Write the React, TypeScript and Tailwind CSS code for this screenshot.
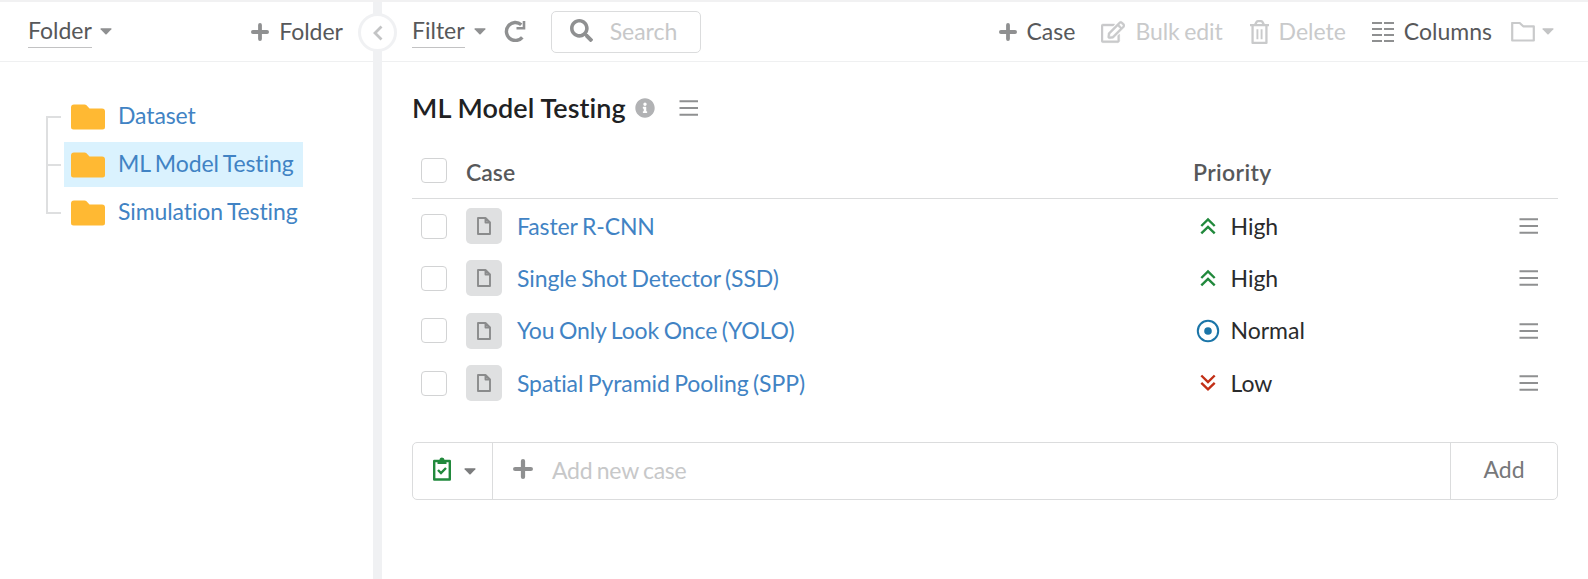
import React from "react";
import { FaInfoCircle, FaRegEdit, FaSearch } from "react-icons/fa";

type P = "High" | "Normal" | "Low";
const cases: { name: string; priority: P }[] = [
  { name: "Faster R-CNN", priority: "High" },
  { name: "Single Shot Detector (SSD)", priority: "High" },
  { name: "You Only Look Once (YOLO)", priority: "Normal" },
  { name: "Spatial Pyramid Pooling (SPP)", priority: "Low" },
];

function Plus({ className = "size-[18px]" }: { className?: string }) {
  return (
    <svg viewBox="0 0 18 18" className={className + " shrink-0 text-[#8f9091]"} fill="none" stroke="currentColor" strokeWidth="3.8" strokeLinecap="round">
      <path d="M9 1.900v14.200M1.900 9h14.200" />
    </svg>
  );
}

function Caret({ className = "text-[#8f9091]" }: { className?: string }) {
  return (
    <svg viewBox="0 0 12 7" className={"h-[7px] w-3 shrink-0 " + className} fill="currentColor">
      <path d="M1 .3h10q1 .3.4 1L6.6 6.2q-.6.6-1.2 0L.6 1.3Q0 .6 1 .3z" />
    </svg>
  );
}

function Menu() {
  return (
    <svg viewBox="0 0 20 16" className="h-4 w-5 shrink-0 text-[#8f9091]" stroke="currentColor" strokeWidth="2">
      <path d="M.5 1.200h18.500M.5 8h18.500M.5 14.800h18.500" />
    </svg>
  );
}

function Check() {
  return <span className="block h-[25px] w-[26px] shrink-0 rounded-[4px] border border-[#d2d3d4] bg-white" />;
}

function FolderRow({ name, active }: { name: string; active?: boolean }) {
  return (
    <div className={"flex h-[45px] w-fit items-center pl-[7px] pr-[9px] " + (active ? "bg-[#daf2fe]" : "")}>
      <svg viewBox="0 0 34 26" className="h-[26px] w-[34px] shrink-0">
        <path fill="#ffb933" d="M3 .5h10.500q1.200 0 2 .8L18.500 4.500H31a3 3 0 0 1 3 3V23a2.500 2.500 0 0 1-2.500 2.500h-29A2.500 2.500 0 0 1 0 23V3.500a3 3 0 0 1 3-3z" />
      </svg>
      <span className="-mt-[3px] ml-[13px] whitespace-nowrap leading-7 tracking-[-0.1px] text-[#4183c4]">{name}</span>
    </div>
  );
}

function PriorityIcon({ p }: { p: P }) {
  if (p === "Normal")
    return (
      <svg viewBox="0 0 24 24" className="size-6">
        <circle cx="12" cy="12" r="10.2" fill="none" stroke="#1b75a8" strokeWidth="2" />
        <circle cx="12" cy="12" r="3.800" fill="#1b75a8" />
      </svg>
    );
  return (
    <svg viewBox="0 0 24 24" className={p === "Low" ? "size-6 text-[#c22f16]" : "size-6 text-[#21893c]"} fill="none" stroke="currentColor" strokeWidth="2.400">
      {p === "Low" ? <path d="M5.300 4.500L12 11l6.700-6.500M5.300 11.800L12 18.300l6.700-6.500" /> : <path d="M5.300 12L12 5.500l6.700 6.500M5.300 19.300L12 12.800l6.700 6.500" />}
    </svg>
  );
}

export default function App() {
  return (
    <div className="flex h-[579px] w-[1588px] overflow-hidden border-t-2 border-[#f1f1f2] bg-white font-['Lato',sans-serif] text-[23px] text-[#57585a] [font-variant-ligatures:none] [word-spacing:-1.2px]">
      <aside className="w-[373px] shrink-0">
        <div className="flex h-[60px] items-center border-b border-[#eff0f1] pl-7 pr-[30px]">
          <span className="-mt-px h-[33px] border-b border-[#c2c2c3] leading-[30px]">Folder</span>
          <Caret className="ml-2 text-[#8f9091]" />
          <span className="ml-auto flex items-center gap-[10px] leading-7"><Plus /><span className="-mt-[2px]">Folder</span></span>
        </div>
        <div className="flex pl-[46px] pt-8">
          <svg viewBox="0 0 16 98" className="mt-[22px] h-[98px] w-4" fill="none" stroke="#dedfe0" strokeWidth="2">
            <path d="M15 1H1v96h14M1 49h14" />
          </svg>
          <div className="ml-[2px] flex flex-col gap-[3px]">
            <FolderRow name="Dataset" />
            <FolderRow name="ML Model Testing" active />
            <FolderRow name="Simulation Testing" />
          </div>
        </div>
      </aside>
      <div className="relative w-[9px] shrink-0 bg-[#f0f1f3]">
        <span className="absolute -left-[15px] top-[11px] flex size-[39px] items-center justify-center rounded-full border-[3px] border-[#f0f1f3] bg-white">
          <svg viewBox="0 0 10 16" className="h-4 w-[10px]" fill="none" stroke="#c3c4c5" strokeWidth="2.800">
            <path d="M8.500 1.500L2 8l6.500 6.500" />
          </svg>
        </span>
      </div>
      <main className="min-w-0 flex-1">
        <div className="flex h-[60px] items-center border-b border-[#eff0f1] pl-[30px]">
          <span className="-mt-px h-[33px] border-b border-[#c2c2c3] leading-[30px]">Filter</span>
          <Caret className="ml-[9px] text-[#8f9091]" />
          <svg viewBox="0 0 22 22" className="-mt-[2px] ml-[18px] size-[22px]" fill="none" stroke="#8f9091" strokeWidth="3.400">
            <path d="M18.300 17.300a9 9 0 1 1-1-12.600" />
            <path d="M20 1v7.300h-7.500" strokeWidth="2.600" />
          </svg>
          <div className="ml-[25px] flex h-[42px] w-[150px] items-center rounded-[5px] border border-[#dbdcdd] pl-[18px]">
            <FaSearch className="-mt-[2px] size-[23px] shrink-0 text-[#8f9091]" />
            <span className="ml-[17px] text-[#c7c8c9]">Search</span>
          </div>
          <div className="ml-auto flex items-center whitespace-nowrap pr-[34px] leading-7">
            <Plus />
            <span className="-mt-[2px] ml-[10px]">Case</span>
            <span className="ml-[26px] flex items-center text-[#c9cacb]">
              <FaRegEdit className="size-6" stroke="currentColor" strokeWidth="10" />
              <span className="-mt-[2px] ml-[10px] tracking-[-0.1px]">Bulk edit</span>
              <svg viewBox="0 0 20 26" className="ml-[27px] h-[26px] w-[19px]" fill="none" stroke="currentColor" strokeWidth="2.400" strokeLinejoin="round">
                <path d="M0 5.800h20M5.500 5l1.500-2.700q.5-.8 1.500-.8h3q1 0 1.500.8L14.500 5M2.700 6v18.500h14.600V6" />
                <path d="M7.800 10v10.500M12.200 10v10.500" strokeWidth="2" />
              </svg>
              <span className="-mt-[2px] ml-[10px]">Delete</span>
            </span>
            <svg viewBox="0 0 22 22" className="ml-[26px] size-[22px]" fill="none" stroke="#8f9091" strokeWidth="2">
              <path d="M0 2h10M12 2h10M0 8h10M12 8h10M0 14h10M12 14h10M0 20h10M12 20h10" />
            </svg>
            <span className="-mt-[2px] ml-[10px]">Columns</span>
            <svg viewBox="0 0 24 20" className="ml-[19px] h-5 w-6 text-[#c9cacb]" fill="none" stroke="currentColor" strokeWidth="2.200">
              <path d="M1.200 1h7.500l3.500 3.300h10.600V18.500H1.200z" strokeLinejoin="round" />
            </svg>
            <Caret className="ml-[7px] text-[#c3c4c5]" />
          </div>
        </div>
        <div className="pl-[30px] pr-[30px]">
          <div className="flex h-[93px] items-center pb-px">
            <h1 className="text-[27px] font-semibold tracking-[0.1px] text-[#202123] [word-spacing:0px]">ML Model Testing</h1>
            <FaInfoCircle className="ml-[9px] size-5 text-[#b1b2b4]" />
            <span className="ml-6"><Menu /></span>
          </div>
          <div className="flex h-[44px] items-start border-b border-[#dbdcdd] pl-[9px] pt-[3px] font-semibold leading-7">
            <Check />
            <span className="ml-[19px] w-[727px]">Case</span>
            <span className="tracking-[0.35px]">Priority</span>
          </div>
          <div className="pt-px">
            {cases.map((c) => (
              <div key={c.name} className="flex h-[52.300px] items-center pl-[9px] pr-[19px]">
                <Check />
                <span className="ml-[19px] flex size-9 items-center justify-center rounded-[5px] bg-[#dfe0e1]">
                  <svg viewBox="0 0 14 18" className="h-[18px] w-[14px]" fill="none" stroke="#8a8b8c" strokeWidth="1.900" strokeLinejoin="round">
                    <path d="M1 1h7.500L13 5.500V17H1zM8.500 1v4.500H13" />
                  </svg>
                </span>
                <span className="ml-[15px] w-[678.500px] tracking-[-0.11px] text-[#4183c4]">{c.name}</span>
                <PriorityIcon p={c.priority} />
                <span className="ml-[11px] text-[#2a2b2c]">{c.priority}</span>
                <span className="ml-auto"><Menu /></span>
              </div>
            ))}
          </div>
          <div className="mt-[33px] flex h-[58px] rounded-[5px] border border-[#dbdcdd]">
            <div className="flex w-[80px] items-center border-r border-[#dbdcdd] pl-5">
              <svg viewBox="0 0 18 24" className="-mt-[4px] h-6 w-[18px] text-[#21893c]" fill="none" stroke="currentColor" strokeWidth="2.400">
                <path d="M1.200 4h15.600v18.500H1.200z" strokeLinejoin="round" />
                <path d="M5 13l3 3 5-5" />
                <path d="M4.500 3h2a2.500 2.500 0 0 1 5 0h2v4h-9z" fill="currentColor" stroke="none" />
              </svg>
              <Caret className="ml-[13px] text-[#7b7c7d]" />
            </div>
            <div className="flex flex-1 items-center pl-5">
              <Plus className="-mt-[4px] size-5" />
              <span className="-mt-[2px] ml-[19px] tracking-[-0.25px] text-[#c7c8c9]">Add new case</span>
            </div>
            <div className="flex w-[107px] items-center justify-center border-l border-[#dbdcdd] pb-1 text-[#77787a]">Add</div>
          </div>
        </div>
      </main>
    </div>
  );
}
